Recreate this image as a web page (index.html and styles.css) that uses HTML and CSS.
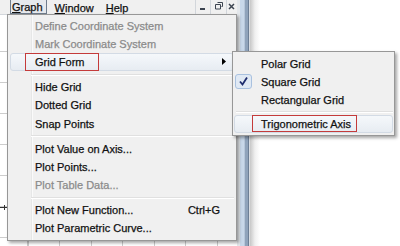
FILE: index.html
```html
<!DOCTYPE html>
<html>

<head>
    <meta name="viewport" content="width=device-width, initial-scale=1" />
    <link rel="stylesheet" href="styles.css">
</head>

<body>
    <div class="screen">
        <div class="doc">
            <div class="menubar">
                <span class="mb-item open"><u>G</u>raph</span>
                <span class="mb-item window"><u>W</u>indow</span>
                <span class="mb-item help"><u>H</u>elp</span>
                <span class="mb-fill"></span>
                <span class="wbtn">
                    <svg width="14" height="13" viewBox="0 0 14 13"><rect x="4" y="8" width="5" height="2" fill="#3c4450" /></svg>
                </span>
                <span class="wbtn">
                    <svg width="15" height="13" viewBox="0 0 15 13">
                        <path d="M6.5 2.5h5v4h-1M4.5 4.5h5v4.5h-5z" fill="none" stroke="#3c4450" />
                    </svg>
                </span>
                <span class="wbtn close">
                    <svg width="10" height="13" viewBox="0 0 10 13"><path d="M2 4l5 5M7 4l-5 5" stroke="#3c4450" stroke-width="1.5" /></svg>
                </span>
            </div>
            <div class="canvas">
                <span class="axis"></span>
            </div>
        </div>
        <div class="frame"></div>
        <div class="desk"></div>

        <!-- Graph menu -->
        <div class="menu main">
            <div class="item off">Define Coordinate System</div>
            <div class="item off">Mark Coordinate System</div>
            <div class="item hot">
                <span class="mark">Grid Form</span>
                <svg class="arrow" width="4" height="7" viewBox="0 0 4 7"><path d="M0 0l4 3.5L0 7z" fill="#000" /></svg>
            </div>
            <div class="sep"></div>
            <div class="item">Hide Grid</div>
            <div class="item">Dotted Grid</div>
            <div class="item">Snap Points</div>
            <div class="sep"></div>
            <div class="item">Plot Value on Axis...</div>
            <div class="item">Plot Points...</div>
            <div class="item off">Plot Table Data...</div>
            <div class="sep"></div>
            <div class="item">Plot New Function...<span class="key">Ctrl+G</span></div>
            <div class="item">Plot Parametric Curve...</div>
        </div>

        <!-- Grid Form submenu -->
        <div class="menu sub">
            <div class="item">Polar Grid</div>
            <div class="item">
                <span class="check">
                    <svg width="17" height="15" viewBox="0 0 17 15"><path d="M5 7.5l2.5 3L12 3.5" fill="none" stroke="#1f2d6e" stroke-width="1.8" /></svg>
                </span>Square Grid
            </div>
            <div class="item">Rectangular Grid</div>
            <div class="sep"></div>
            <div class="item hot"><span class="mark">Trigonometric Axis</span></div>
        </div>
    </div>
</body>

</html>
```

FILE: styles.css
```css
body {
    margin: 0;
    font-family: "Liberation Sans", Arial, sans-serif;
    font-size: 11px;
    color: #111;
    background-color: #fff;
    overflow: hidden;
}

.screen {
    position: relative;
    display: flex;
    width: 400px;
    height: 246px;
    overflow: hidden;
    -webkit-text-stroke: 0.25px;
}

/* the document window on the left */
.doc {
    display: flex;
    flex-direction: column;
    width: 237px;
}

.menubar {
    display: flex;
    align-items: stretch;
    height: 14px;
    background-color: #f0f0f0;
    border-bottom: 1px solid #d3d7dc;
}

.mb-item {
    display: flex;
    align-items: center;
    padding-top: 1px;
}

.mb-item.open {
    margin-left: 10px;
    padding: 1px 3px 0 1px;
    border: 1px solid #6f7c8c;
    border-top: none;
    background-color: #e6e9ed;
}

.mb-item.window {
    margin-left: 8px;
}

.mb-item.help {
    margin-left: 12px;
}

.mb-fill {
    flex: 1;
}

.wbtn {
    display: flex;
    border-left: 1px solid #d2d6db;
}

.wbtn.close {
    width: 10px;
}

.canvas {
    position: relative;
    flex: 1;
    background-color: #fff;
    background-image:
        repeating-linear-gradient(90deg, transparent 0 27.5px, #cdcdcd 27.5px 28.5px, transparent 28.5px 31.5px),
        repeating-linear-gradient(180deg, #cdcdcd 0 1px, transparent 1px 31px);
    background-size: 100% 100%, 100% 100%;
    background-position: 0 0, 0 36px;
    background-repeat: no-repeat;
}

.axis {
    position: absolute;
    left: 0;
    right: 0;
    top: 192px;
    border-top: 1px solid #333;
}

.axis::after {
    content: "";
    position: absolute;
    left: 4px;
    top: -3px;
    height: 5px;
    border-left: 1px solid #333;
}

/* window border and the desktop behind it */
.frame {
    width: 13px;
    background: linear-gradient(90deg, #e4e8ec 0 3px, #c8d8ea 3px 7px, #b7c7da 7px 8px, #8fa3bb 8px 11px, #6d7f96 11px 12px, #d9dde2 12px);
}

.desk {
    flex: 1;
    background: linear-gradient(90deg, rgba(0, 0, 0, 0.22), rgba(0, 0, 0, 0.06) 5px, rgba(0, 0, 0, 0) 10px), #fff;
}

/* drop down menus */
.menu {
    position: absolute;
    box-sizing: border-box;
    background-color: #f0f0f0;
    border: 1px solid #979797;
    box-shadow: 2px 2px 3px rgba(0, 0, 0, 0.35);
}

.main {
    left: 7px;
    top: 14px;
    width: 230px;
    padding: 1.5px 2px 2px;
    background-image: linear-gradient(90deg, transparent 0 23px, #e6e7e7 23px 24px, #fafafa 24px 25px, transparent 25px);
}

.sub {
    left: 232px;
    top: 51px;
    width: 163px;
    padding: 2.5px 1px 2px;
}

.item {
    box-sizing: border-box;
    display: flex;
    align-items: center;
    height: 18.2px;
    padding-left: 25px;
    padding-right: 14px;
    white-space: nowrap;
}

.sub .item {
    padding-left: 27px;
}

.item.off {
    color: #8b8b8b;
}

.item.hot {
    border: 1px solid #d3dbe5;
    border-radius: 3px;
    background: linear-gradient(#f5f8fb, #e7ecf2);
}

.main .item.hot {
    padding-left: 24px;
}

.sub .item.hot {
    padding-left: 26px;
}

.key {
    margin-left: auto;
}

.arrow {
    margin-left: auto;
    margin-right: -7px;
}

.mark {
    display: flex;
    align-items: center;
    align-self: stretch;
    margin: -1px 0 -1px -10px;
    padding: 0 13px 0 9px;
    border: 1px solid #c43b3b;
}

.sub .mark {
    align-self: center;
    height: 15px;
    margin-left: -9px;
    padding: 0 5px 0 8px;
}

.check {
    display: flex;
    box-sizing: border-box;
    width: 17px;
    height: 15px;
    margin-left: -26px;
    margin-right: 9px;
    border: 1px solid #a9c1df;
    border-radius: 3px;
    background-color: #e0e9f4;
}

.check svg {
    margin: -1px;
}

.sep {
    height: 7px;
    display: flex;
    align-items: center;
}

.sep::after {
    content: "";
    flex: 1;
    margin-left: 21px;
    border-top: 1px solid #e0e0e0;
    border-bottom: 1px solid #fff;
}

.sub .sep {
    height: 5.5px;
}

.sub .sep::after {
    margin-left: 2px;
}
```
